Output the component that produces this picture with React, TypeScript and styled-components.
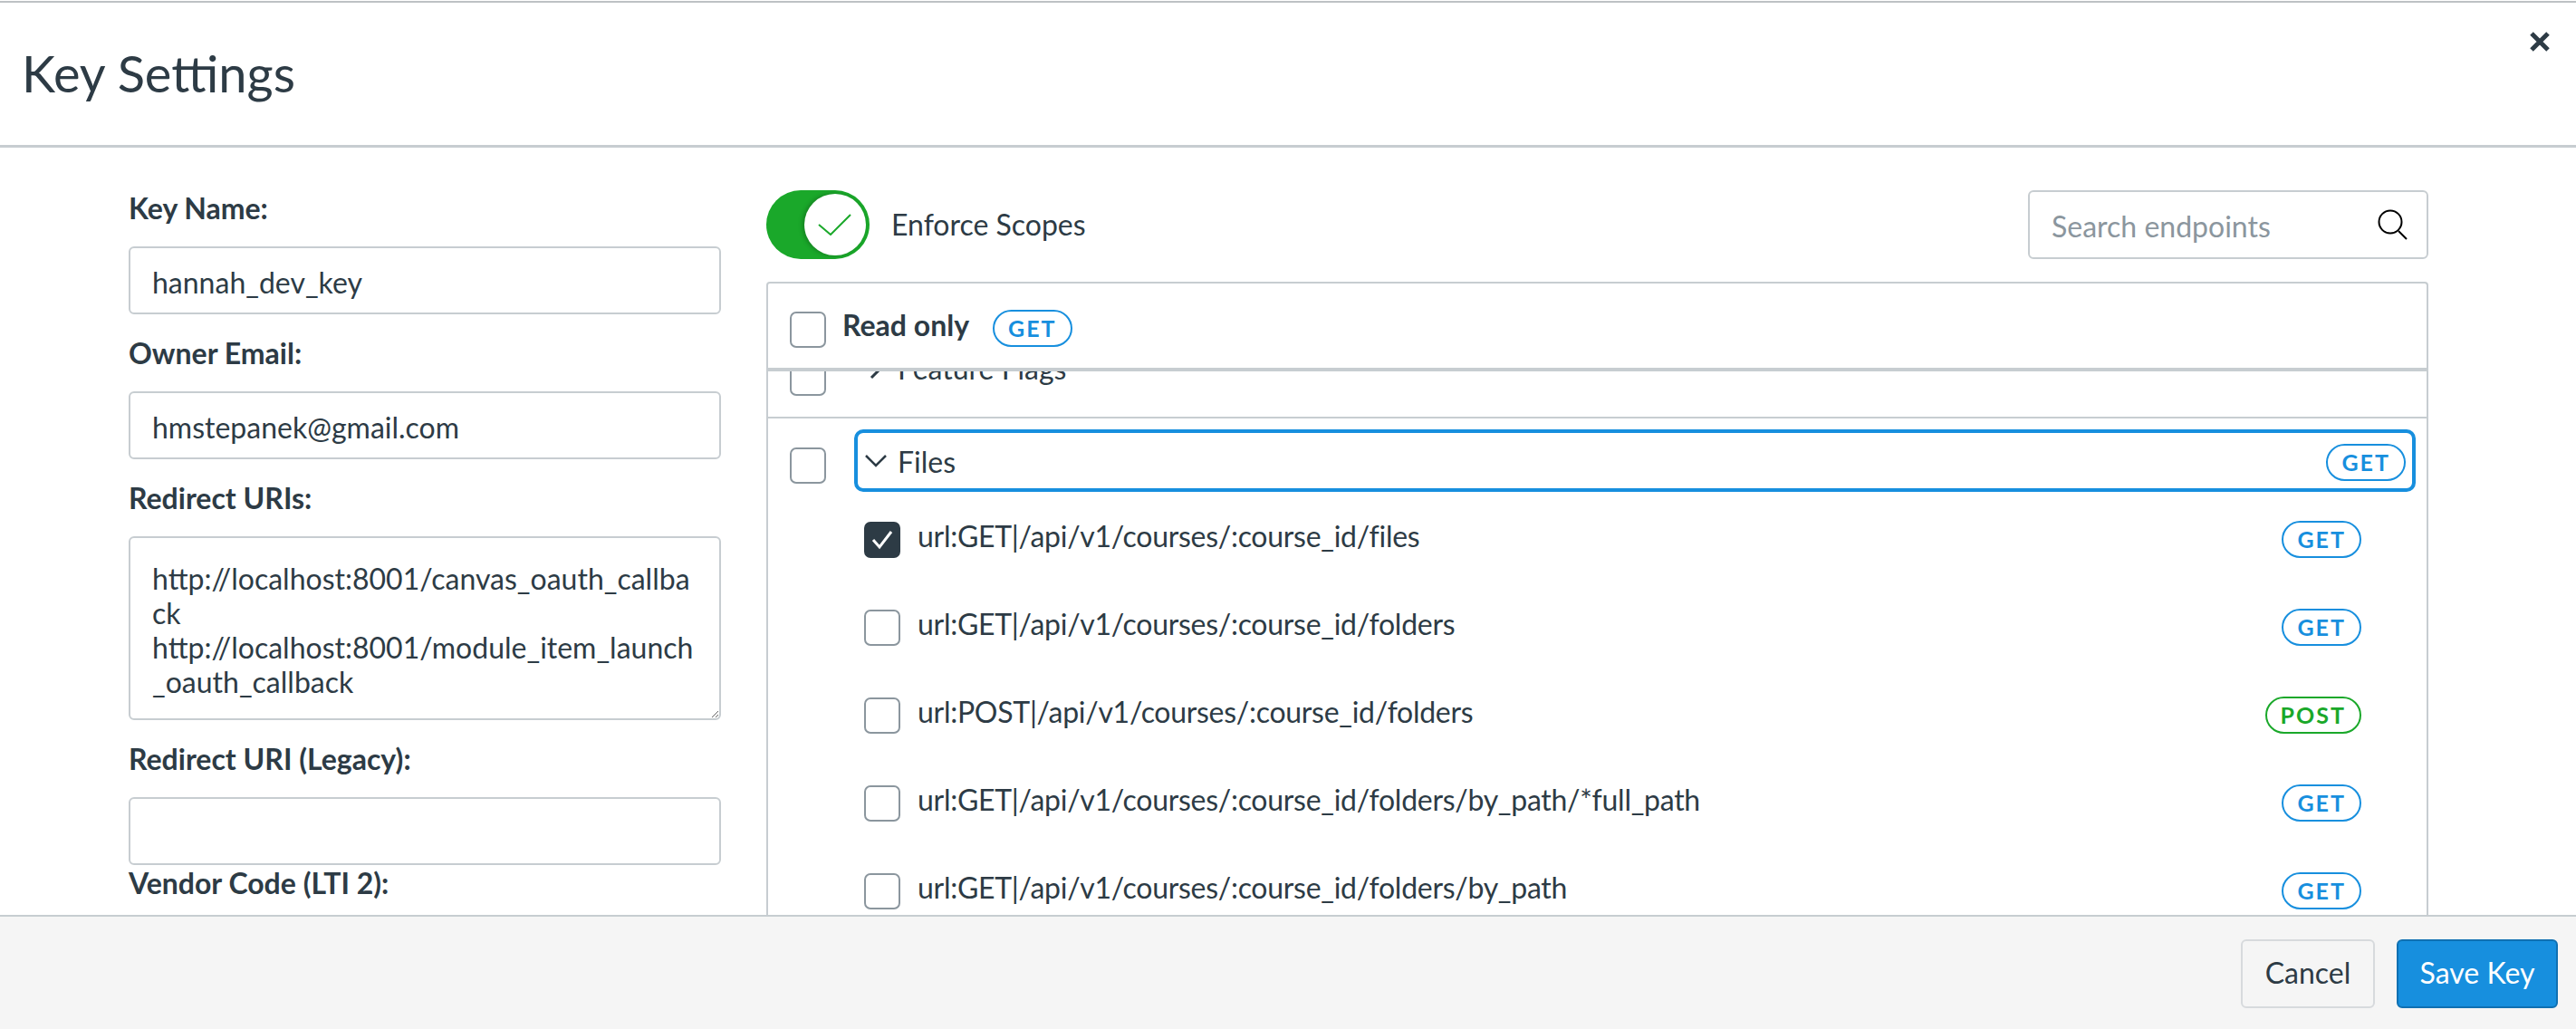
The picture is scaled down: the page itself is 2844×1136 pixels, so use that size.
import styled, { createGlobalStyle } from "styled-components";

const ink = "#2d3b45";
const line = "#c7cdd1";
const blue = "#178fde";
const green = "#1aa82a";

const GlobalStyle = createGlobalStyle`
  html, body {
    margin: 0;
    padding: 0;
    background: #fff;
  }
  * {
    box-sizing: border-box;
  }
`;

type Endpoint = {
  path: string;
  method: "GET" | "POST";
  checked?: boolean;
};

const endpoints: Endpoint[] = [
  { path: "url:GET|/api/v1/courses/:course_id/files", method: "GET", checked: true },
  { path: "url:GET|/api/v1/courses/:course_id/folders", method: "GET" },
  { path: "url:POST|/api/v1/courses/:course_id/folders", method: "POST" },
  { path: "url:GET|/api/v1/courses/:course_id/folders/by_path/*full_path", method: "GET" },
  { path: "url:GET|/api/v1/courses/:course_id/folders/by_path", method: "GET" },
];

export default function App() {
  return (
    <Page>
      <GlobalStyle />
      <Header>
        <Title>Key Settings</Title>
        <CloseButton aria-label="Close">
          <svg width="22" height="22" viewBox="0 0 22 22">
            <path d="M2 2l18 18M20 2L2 20" stroke={ink} strokeWidth="5" fill="none" />
          </svg>
        </CloseButton>
      </Header>

      <Body>
        <FormColumn>
          <Field>
            <Label>Key Name:</Label>
            <TextInput defaultValue="hannah_dev_key" />
          </Field>
          <Field>
            <Label>Owner Email:</Label>
            <TextInput defaultValue="hmstepanek@gmail.com" />
          </Field>
          <Field>
            <Label>Redirect URIs:</Label>
            <TextArea
              defaultValue={
                "http://localhost:8001/canvas_oauth_callback\nhttp://localhost:8001/module_item_launch_oauth_callback"
              }
            />
          </Field>
          <Field $tight>
            <Label>Redirect URI (Legacy):</Label>
            <TextInput />
          </Field>
          <Field>
            <Label>Vendor Code (LTI 2):</Label>
            <TextInput />
          </Field>
        </FormColumn>

        <ScopesColumn>
          <ScopesBar>
            <ToggleGroup>
              <ToggleTrack>
                <ToggleKnob>
                  <svg width="38" height="24" viewBox="0 0 38 24">
                    <path d="M1 12l13 11L36 1" stroke={green} strokeWidth="2" fill="none" />
                  </svg>
                </ToggleKnob>
              </ToggleTrack>
              <ToggleLabel>Enforce Scopes</ToggleLabel>
            </ToggleGroup>
            <SearchBox>
              <SearchInput placeholder="Search endpoints" />
              <SearchIcon width="34" height="34" viewBox="0 0 34 34">
                <circle cx="14" cy="14" r="12.5" stroke="#000" strokeWidth="2" fill="none" />
                <path d="M23 24l9 9" stroke="#000" strokeWidth="2" fill="none" />
              </SearchIcon>
            </SearchBox>
          </ScopesBar>

          <ScopesTable>
            <TableHead>
              <CheckBox />
              <HeadLabel>Read only</HeadLabel>
              <MethodBadge $method="GET">GET</MethodBadge>
            </TableHead>

            <ScrollArea>
              <ClippedGroup>
                <CheckBox $top={20} />
                <GroupLabel>
                  <ChevronSlot>
                    <svg width="16" height="24" viewBox="0 0 16 24">
                      <path d="M3 2l10 10L3 22" stroke={ink} strokeWidth="3" fill="none" />
                    </svg>
                  </ChevronSlot>
                  Feature Flags
                </GroupLabel>
              </ClippedGroup>

              <GroupRow>
                <CheckBox $top={20} />
                <GroupToggle>
                  <ChevronSlot>
                    <svg width="24" height="15" viewBox="0 0 24 15">
                      <path d="M1 2l11 11L23 2" stroke={ink} strokeWidth="2.5" fill="none" />
                    </svg>
                  </ChevronSlot>
                  <GroupName>Files</GroupName>
                  <MethodBadge $method="GET">GET</MethodBadge>
                </GroupToggle>
              </GroupRow>

              {endpoints.map((endpoint) => (
                <EndpointRow key={endpoint.path}>
                  <CheckBox $checked={endpoint.checked}>
                    {endpoint.checked && (
                      <svg width="26" height="24" viewBox="0 0 26 24">
                        <path d="M3 12l7 8L23 3" stroke="#fff" strokeWidth="3" fill="none" />
                      </svg>
                    )}
                  </CheckBox>
                  <EndpointPath>{endpoint.path}</EndpointPath>
                  <MethodBadge $method={endpoint.method}>{endpoint.method}</MethodBadge>
                </EndpointRow>
              ))}
            </ScrollArea>
          </ScopesTable>
        </ScopesColumn>
      </Body>

      <Footer>
        <CancelButton>Cancel</CancelButton>
        <SaveButton>Save Key</SaveButton>
      </Footer>
    </Page>
  );
}

const Page = styled.div`
  height: 1136px;
  display: flex;
  flex-direction: column;
  overflow: hidden;
  background: #fff;
  color: ${ink};
  font-family: Lato, "Noto Sans", sans-serif;
  font-size: 32px;
  padding-top: 1px;
`;

const Header = styled.header`
  height: 162px;
  flex: none;
  display: flex;
  justify-content: space-between;
  align-items: flex-start;
  border-top: 2px solid #bdc1c4;
  border-bottom: 3px solid ${line};
  padding-left: 24px;
`;

const Title = styled.h1`
  margin: 42px 0 0;
  font-size: 56px;
  font-weight: 400;
  line-height: 72px;
`;

const CloseButton = styled.button`
  width: 22px;
  height: 22px;
  margin: 32px 29px 0 0;
  padding: 0;
  border: 0;
  background: none;
  display: block;
  svg {
    display: block;
  }
`;

const Body = styled.main`
  flex: 1;
  min-height: 0;
  display: flex;
  gap: 50px;
  padding: 0 163px 0 142px;
  overflow: hidden;
`;

const FormColumn = styled.section`
  width: 654px;
  flex: none;
  padding-top: 50px;
`;

const Field = styled.div<{ $tight?: boolean }>`
  margin-bottom: ${(p) => (p.$tight ? "3px" : "26px")};
`;

const Label = styled.label`
  display: block;
  font-weight: 700;
  line-height: 34px;
  margin-bottom: 25px;
`;

const TextInput = styled.input`
  display: block;
  width: 100%;
  height: 75px;
  padding: 3px 24px 0;
  border: 2px solid ${line};
  border-radius: 6px;
  background: #fff;
  color: ${ink};
  font: inherit;
  outline: none;
`;

const TextArea = styled.textarea`
  display: block;
  width: 100%;
  height: 203px;
  padding: 26px 24px;
  border: 2px solid ${line};
  border-radius: 6px;
  background: #fff;
  color: ${ink};
  font: inherit;
  line-height: 38px;
  outline: none;
  overflow: hidden;
`;

const ScopesColumn = styled.section`
  flex: 1;
  min-width: 0;
  display: flex;
  flex-direction: column;
`;

const ScopesBar = styled.div`
  display: flex;
  justify-content: space-between;
  align-items: center;
  height: 76px;
  margin-top: 47px;
  flex: none;
`;

const ToggleGroup = styled.div`
  display: flex;
  align-items: center;
  gap: 24px;
`;

const ToggleTrack = styled.div`
  width: 114px;
  height: 76px;
  padding: 4px;
  border-radius: 38px;
  background: ${green};
  display: flex;
  justify-content: flex-end;
`;

const ToggleKnob = styled.div`
  width: 68px;
  height: 68px;
  border-radius: 50%;
  background: #fff;
  box-shadow: -2px 0 5px rgba(0, 0, 0, 0.25);
  display: flex;
  align-items: center;
  justify-content: center;
`;

const ToggleLabel = styled.span`
  line-height: 40px;
`;

const SearchBox = styled.div`
  width: 442px;
  height: 76px;
  border: 2px solid ${line};
  border-radius: 6px;
  display: flex;
  align-items: center;
  padding: 0 20px 0 24px;
`;

const SearchInput = styled.input`
  flex: 1;
  min-width: 0;
  border: 0;
  padding: 2px 0 0;
  outline: none;
  background: none;
  color: ${ink};
  font: inherit;
  &::placeholder {
    color: #8b969e;
    opacity: 1;
  }
`;

const SearchIcon = styled.svg`
  flex: none;
`;

const ScopesTable = styled.div`
  flex: 1;
  min-height: 0;
  margin-top: 25px;
  border: 2px solid ${line};
  border-bottom: 0;
  border-radius: 4px 4px 0 0;
  display: flex;
  flex-direction: column;
`;

const TableHead = styled.div`
  height: 97px;
  flex: none;
  display: flex;
  align-items: flex-start;
  padding: 31px 0 0 24px;
  border-bottom: 4px solid ${line};
`;

const HeadLabel = styled.span`
  font-weight: 700;
  line-height: 40px;
  margin: -5px 0 0 18px;
`;

const CheckBox = styled.span<{ $checked?: boolean; $top?: number }>`
  width: 40px;
  height: 40px;
  flex: none;
  margin-top: ${(p) => p.$top ?? 0}px;
  border: 2px solid ${(p) => (p.$checked ? ink : "#8b969e")};
  border-radius: 7px;
  background: ${(p) => (p.$checked ? ink : "#fff")};
  display: flex;
  align-items: center;
  justify-content: center;
`;

const MethodBadge = styled.span<{ $method: "GET" | "POST" }>`
  flex: none;
  height: 41px;
  padding: 0 15px;
  border: 2px solid ${(p) => (p.$method === "GET" ? blue : green)};
  border-radius: 21px;
  color: ${(p) => (p.$method === "GET" ? blue : green)};
  font-size: 25px;
  font-weight: 700;
  letter-spacing: 2px;
  line-height: 36px;
  text-align: center;
  ${() => TableHead} & {
    margin: -2px 0 0 26px;
  }
`;

const ScrollArea = styled.div`
  flex: 1;
  min-height: 0;
  overflow: hidden;
`;

const GroupRow = styled.div`
  height: 85px;
  display: flex;
  align-items: flex-start;
  padding: 12px 12px 0 24px;
`;

const ClippedGroup = styled(GroupRow)`
  margin-top: -33px;
  height: 85px;
  padding-top: 0;
  border-bottom: 2px solid ${line};
`;

const ChevronSlot = styled.span`
  width: 24px;
  flex: none;
  margin-right: 12px;
  display: flex;
  justify-content: center;
`;

const GroupLabel = styled.div`
  display: flex;
  align-items: center;
  margin: 10px 0 0 31px;
  padding-left: 12px;
  line-height: 40px;
`;

const GroupToggle = styled.div`
  flex: 1;
  height: 69px;
  margin-left: 31px;
  padding: 0 7px 0 8px;
  border: 4px solid ${blue};
  border-radius: 10px;
  display: flex;
  align-items: center;
  ${() => MethodBadge} {
    margin-top: 4px;
  }
`;

const GroupName = styled.span`
  flex: 1;
  line-height: 40px;
  padding-top: 2px;
`;

const EndpointRow = styled.div`
  height: 97px;
  display: flex;
  align-items: center;
  gap: 19px;
  padding: 0 72px 0 106px;
  ${() => MethodBadge} {
    margin-bottom: 1px;
  }
`;

const EndpointPath = styled.span`
  flex: 1;
  line-height: 40px;
  padding-bottom: 8px;
  letter-spacing: -0.28px;
`;

const Footer = styled.footer`
  height: 126px;
  flex: none;
  display: flex;
  justify-content: flex-end;
  align-items: flex-start;
  gap: 24px;
  padding: 25px 20px 0 0;
  border-top: 2px solid ${line};
  background: #f5f5f5;
`;

const CancelButton = styled.button`
  width: 148px;
  height: 76px;
  padding: 0 0 3px;
  border: 2px solid #d7dadd;
  border-radius: 6px;
  background: #f5f5f5;
  color: ${ink};
  font: inherit;
`;

const SaveButton = styled.button`
  width: 178px;
  height: 76px;
  padding: 0 0 3px;
  border: 2px solid #0f70b2;
  border-radius: 6px;
  background: ${blue};
  color: #fff;
  font: inherit;
`;
